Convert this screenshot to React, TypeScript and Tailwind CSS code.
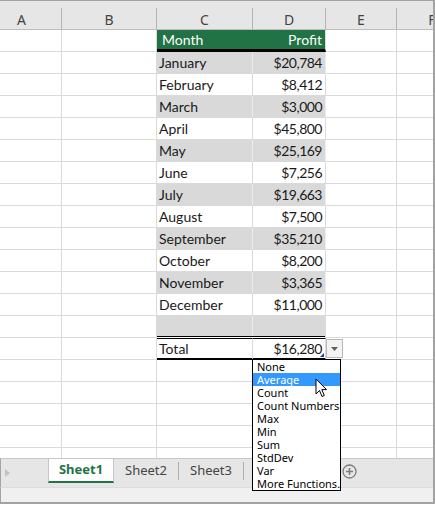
import React from 'react';

const months = [
  ['January', '$20,784'],
  ['February', '$8,412'],
  ['March', '$3,000'],
  ['April', '$45,800'],
  ['May', '$25,169'],
  ['June', '$7,256'],
  ['July', '$19,663'],
  ['August', '$7,500'],
  ['September', '$35,210'],
  ['October', '$8,200'],
  ['November', '$3,365'],
  ['December', '$11,000'],
];

const options = ['None', 'Average', 'Count', 'Count Numbers', 'Max', 'Min', 'Sum', 'StdDev', 'Var', 'More Functions...'];

const cellFont = { fontFamily: 'Lato, "Liberation Sans", sans-serif' };

function Empty({ w, last }: { w: string; last?: boolean }) {
  return <div className={`${w} h-full shrink-0 border-b border-[#dadada] ${last ? '' : 'border-r'}`} />;
}

function GridRow({ children }: { children: React.ReactNode }) {
  return (
    <div className="flex h-[22px] shrink-0">
      <Empty w="w-[62px]" />
      <Empty w="w-[95px]" />
      {children}
      <Empty w="w-[71px]" />
      <Empty w="w-[36px]" last />
    </div>
  );
}

export default function App() {
  return (
    <div className="w-[435px] h-[506px] bg-white overflow-hidden relative" style={{ fontFamily: '"Noto Sans", sans-serif' }}>
      <div className="h-[504px] flex flex-col border-t border-r-2 border-b-2 border-[#a3a3a3]">
        {/* column headers */}
        <div className="flex items-end h-[29px] shrink-0 bg-[#e6e6e6] border-b border-[#bdbdbd] text-[14px] text-[#444] overflow-hidden">
          <div className="w-[61px] h-[20px] shrink-0 flex items-center justify-center pr-[18px]">A</div>
          <div className="w-px h-[21px] shrink-0 bg-[#b4b4b4]" />
          <div className="w-[94px] h-[20px] shrink-0 flex items-center justify-center">B</div>
          <div className="w-px h-[21px] shrink-0 bg-[#b4b4b4]" />
          <div className="w-[95px] h-[20px] shrink-0 flex items-center justify-center">C</div>
          <div className="w-px h-[21px] shrink-0 bg-[#b4b4b4]" />
          <div className="w-[72px] h-[20px] shrink-0 flex items-center justify-center">D</div>
          <div className="w-px h-[21px] shrink-0 bg-[#b4b4b4]" />
          <div className="w-[70px] h-[20px] shrink-0 flex items-center justify-center">E</div>
          <div className="w-px h-[21px] shrink-0 bg-[#b4b4b4]" />
          <div className="w-[70px] h-[20px] shrink-0 flex items-center justify-center">F</div>
        </div>

        {/* grid */}
        <div className="h-[428px] shrink-0 overflow-hidden flex flex-col text-[14px] text-[#1a1a1a]" style={cellFont}>
          <GridRow>
            <div className="w-[96px] h-full shrink-0 bg-[#217346] border-b-[3px] border-black text-white flex items-center pl-[5px]">Month</div>
            <div className="w-[73px] h-full shrink-0 bg-[#217346] border-b-[3px] border-black border-r border-r-[#dadada] text-white flex items-center justify-end pr-[3px]">Profit</div>
          </GridRow>
          {months.map(([m, v], i) => {
            const shade = i % 2 === 0;
            return (
              <GridRow key={m}>
                <div className={`w-[96px] h-full shrink-0 flex items-center pl-[2px] border-r border-b ${shade ? 'bg-[#d9d9d9] border-r-[#ececec] border-b-[#d9d9d9]' : 'border-[#dadada]'}`}>{m}</div>
                <div className={`w-[73px] h-full shrink-0 flex items-center justify-end pr-[3px] tracking-[-0.5px] border-r border-b ${shade ? 'bg-[#d9d9d9] border-r-[#ececec] border-b-[#d9d9d9]' : 'border-[#dadada]'}`}>{v}</div>
              </GridRow>
            );
          })}
          <GridRow>
            <div className="w-[96px] h-full shrink-0 flex flex-col">
              <div className="h-[20px] bg-[#d9d9d9] border-r border-[#ececec]" />
              <div className="h-px bg-black" />
              <div className="h-px bg-white" />
            </div>
            <div className="w-[73px] h-full shrink-0 flex flex-col border-r border-[#dadada]">
              <div className="h-[20px] bg-[#d9d9d9]" />
              <div className="h-px bg-black" />
              <div className="h-px bg-white" />
            </div>
          </GridRow>
          <GridRow>
            <div className="w-[96px] h-full shrink-0 flex items-center pl-[2px] border-t border-t-black border-b-2 border-b-black border-r border-r-[#dadada]">Total</div>
            <div className="w-[73px] h-full shrink-0 flex items-center justify-end pr-[3px] tracking-[-0.5px] border-t border-t-black border-b-2 border-b-black border-r border-r-[#dadada] relative">
              $16,280
              <svg className="absolute right-[1px] bottom-[1px]" width="4" height="4" viewBox="0 0 4 4">
                <path d="M4 0 L4 4 L0 4 Z" fill="#1f3d8a" />
              </svg>
            </div>
          </GridRow>
          {[0, 1, 2, 3, 4].map((k) => (
            <GridRow key={k}>
              <Empty w="w-[96px]" />
              <Empty w="w-[73px]" />
            </GridRow>
          ))}
        </div>

        {/* sheet tabs */}
        <div className="h-[29px] shrink-0 flex items-start bg-[#e6e6e6] border-t border-[#c8c8c8] border-l border-l-[#a3a3a3] text-[13px]">
          <div className="w-[47px] h-[28px] shrink-0 flex items-center pl-[4px]">
            <svg width="5" height="8" viewBox="0 0 5 8"><path d="M0 0 L5 4 L0 8 Z" fill="#c2c2c2" /></svg>
          </div>
          <div className="w-[66px] h-[24px] shrink-0 bg-white border-l border-r border-[#c6c6c6] border-b-2 border-b-[#217346] flex items-center justify-center font-bold text-[#217346]">Sheet1</div>
          <div className="w-[64px] h-[24px] shrink-0 flex items-center justify-center text-[#444]">Sheet2</div>
          <div className="w-px h-[18px] mt-[3px] shrink-0 bg-[#b0b0b0]" />
          <div className="w-[64px] h-[24px] shrink-0 flex items-center justify-center text-[#444]">Sheet3</div>
          <div className="w-px h-[18px] mt-[3px] shrink-0 bg-[#b0b0b0]" />
          <div className="w-[98px] shrink-0" />
          <div className="h-[24px] flex items-center">
            <svg width="15" height="15" viewBox="0 0 15 15">
              <circle cx="7.5" cy="7.5" r="6.5" fill="none" stroke="#7a7a7a" strokeWidth="1.3" />
              <path d="M7.5 4 V11 M4 7.5 H11" stroke="#7a7a7a" strokeWidth="1.5" />
            </svg>
          </div>
        </div>
        <div className="h-[15px] shrink-0 bg-[#f0f0f0] border-t border-[#dcdcdc] border-l border-l-[#a3a3a3]" />
      </div>

      {/* autofilter button */}
      <div className="absolute left-[326px] top-[339px] w-[17px] h-[19px] bg-[#f3f3f3] border border-[#b8b8b8] flex items-center justify-center">
        <svg width="7" height="4" viewBox="0 0 7 4"><path d="M0 0 H7 L3.5 4 Z" fill="#5f5f5f" /></svg>
      </div>

      {/* dropdown list */}
      <div className="absolute left-[252px] top-[359px] w-[89px] h-[132px] bg-white border border-black overflow-hidden text-[11px] text-black leading-[13px]">
        {options.map((o) => (
          <div key={o} className={`h-[13px] pl-[4px] whitespace-nowrap ${o === 'Average' ? 'bg-[#3399ff] text-white' : ''}`}>{o}</div>
        ))}
      </div>

      {/* mouse pointer */}
      <svg className="absolute left-[315px] top-[378px]" width="13" height="21" viewBox="0 0 13 21">
        <path d="M1 1 L1 16 L4.5 12.5 L7 18.5 L9.3 17.5 L6.8 11.6 L11.5 11.6 Z" fill="white" stroke="black" strokeWidth="1" strokeLinejoin="miter" />
      </svg>
    </div>
  );
}
